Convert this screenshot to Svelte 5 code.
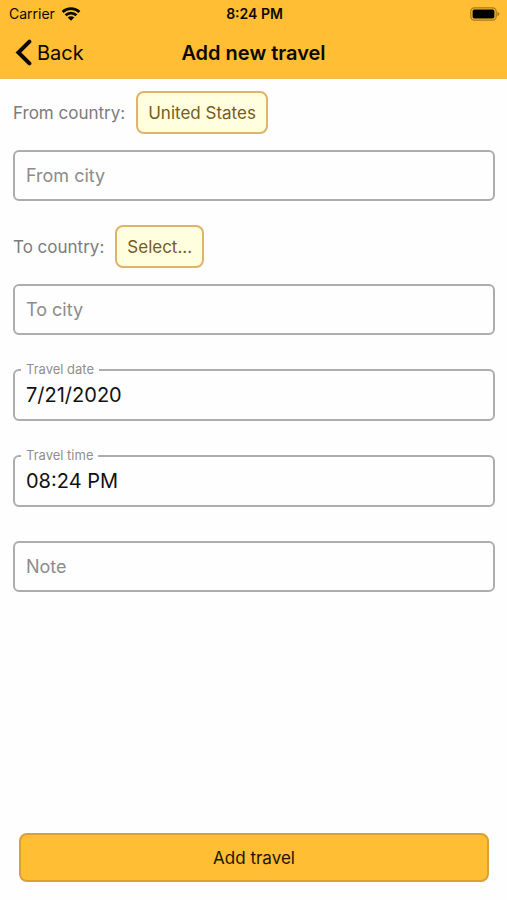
<script>
  let fromCountry = $state('United States');
  let toCountry = $state('');
  let fromCity = $state('');
  let toCity = $state('');
  let travelDate = $state('7/21/2020');
  let travelTime = $state('08:24 PM');
  let note = $state('');
</script>

<div class="screen">
  <header>
    <div class="status">
      <div class="carrier">
        <span>Carrier</span>
        <svg width="20" height="14" viewBox="0 0 20 14" aria-hidden="true">
          <g fill="none" stroke="#0c0900" stroke-width="2.7">
            <path d="M1.6 5C6.2 .6 13.8 .6 18.4 5" />
            <path d="M4.6 8.3C7.6 5.4 12.4 5.4 15.4 8.3" />
          </g>
          <path d="M6.7 10.4C8.6 8.7 11.4 8.7 13.3 10.4L10 13.7z" fill="#0c0900" />
        </svg>
      </div>
      <span class="clock">8:24 PM</span>
      <svg class="battery" width="30" height="14" viewBox="0 0 30 14" aria-hidden="true">
        <rect x=".8" y=".8" width="25.4" height="12.4" rx="3.6" fill="none" stroke="#a87a1b" stroke-width="1.2" />
        <rect x="2.6" y="2.6" width="21.8" height="8.8" rx="1.6" fill="#000" />
        <path d="M27.4 4.8C30 5.6 30 8.4 27.4 9.2z" fill="#a87a1b" />
      </svg>
    </div>
    <nav>
      <button class="back" type="button">
        <svg width="17" height="27" viewBox="0 0 17 27" aria-hidden="true">
          <path d="M14.4 2.6L3.4 13.5L14.4 24.4" fill="none" stroke="#0c0900" stroke-width="4" stroke-linecap="round" stroke-linejoin="miter" />
        </svg>
        <span>Back</span>
      </button>
      <h1>Add new travel</h1>
    </nav>
  </header>

  <form onsubmit={(e) => e.preventDefault()}>
    <div class="country">
      <label for="from-country">From country:</label>
      <button id="from-country" type="button">{fromCountry || 'Select...'}</button>
    </div>
    <input class="box" aria-label="From city" placeholder="From city" bind:value={fromCity} />

    <div class="country second">
      <label for="to-country">To country:</label>
      <button id="to-country" type="button">{toCountry || 'Select...'}</button>
    </div>
    <input class="box" aria-label="To city" placeholder="To city" bind:value={toCity} />

    <div class="field">
      <label for="travel-date">Travel date</label>
      <input id="travel-date" class="box filled" bind:value={travelDate} />
    </div>
    <div class="field">
      <label for="travel-time">Travel time</label>
      <input id="travel-time" class="box filled" bind:value={travelTime} />
    </div>
    <div class="field">
      <input class="box" aria-label="Note" placeholder="Note" bind:value={note} />
    </div>

    <button class="submit" type="submit">Add travel</button>
  </form>
</div>

<style>
  :global(body) {
    margin: 0;
    background: #fefefe;
  }

  .screen {
    display: flex;
    flex-direction: column;
    min-height: 100vh;
    font-family: Inter, 'Liberation Sans', sans-serif;
    color: #0c0900;
  }

  .screen * {
    box-sizing: border-box;
  }

  button,
  input {
    font-family: inherit;
    margin: 0;
  }

  header {
    background: #ffbe33;
    border-bottom: 1px solid #efba50;
  }

  .status,
  nav {
    display: grid;
    grid-template-columns: 1fr auto 1fr;
    align-items: center;
  }

  .status {
    height: 27px;
    padding: 0 7px 0 9px;
    font-size: 14px;
  }

  .carrier {
    display: flex;
    align-items: center;
    gap: 6px;
  }

  .clock {
    font-weight: 600;
  }

  .battery {
    justify-self: end;
  }

  nav {
    height: 51px;
    padding: 0 15px;
  }

  .back {
    display: flex;
    align-items: center;
    justify-self: start;
    gap: 5px;
    padding: 0;
    border: 0;
    background: none;
    color: inherit;
    font-size: 20px;
  }

  h1 {
    margin: 0;
    font-size: 20px;
    font-weight: 600;
  }

  form {
    flex: 1;
    display: flex;
    flex-direction: column;
    padding: 12px 12px 18px 13px;
  }

  .country {
    display: flex;
    align-items: center;
    gap: 11px;
    margin-bottom: 16px;
    font-size: 17px;
    color: #7c7c7c;
  }

  .second {
    margin-top: 24px;
  }

  .country button {
    height: 43px;
    padding: 0 10px;
    border: 2px solid #dfb36a;
    border-radius: 8px;
    background: #ffffe0;
    color: #755b1e;
    font-size: 17px;
  }

  .box {
    display: block;
    width: 100%;
    height: 51px;
    padding: 0 11px;
    border: 2px solid #adadad;
    border-radius: 6px;
    background: #fefefe;
    color: #111;
    font-size: 18px;
    outline: none;
  }

  .box::placeholder {
    color: #8c8c8c;
    opacity: 1;
  }

  .filled {
    height: 52px;
    font-size: 20px;
  }

  .field {
    position: relative;
    margin-top: 34px;
  }

  .field label {
    position: absolute;
    top: -8px;
    left: 8px;
    padding: 0 5px;
    background: #fefefe;
    color: #8f8f8f;
    font-size: 13px;
    line-height: 16px;
  }

  .submit {
    height: 49px;
    margin: auto 6px 0;
    border: 2px solid #dba032;
    border-radius: 8px;
    background: #ffbe33;
    color: #1c1400;
    font-size: 17px;
  }
</style>
